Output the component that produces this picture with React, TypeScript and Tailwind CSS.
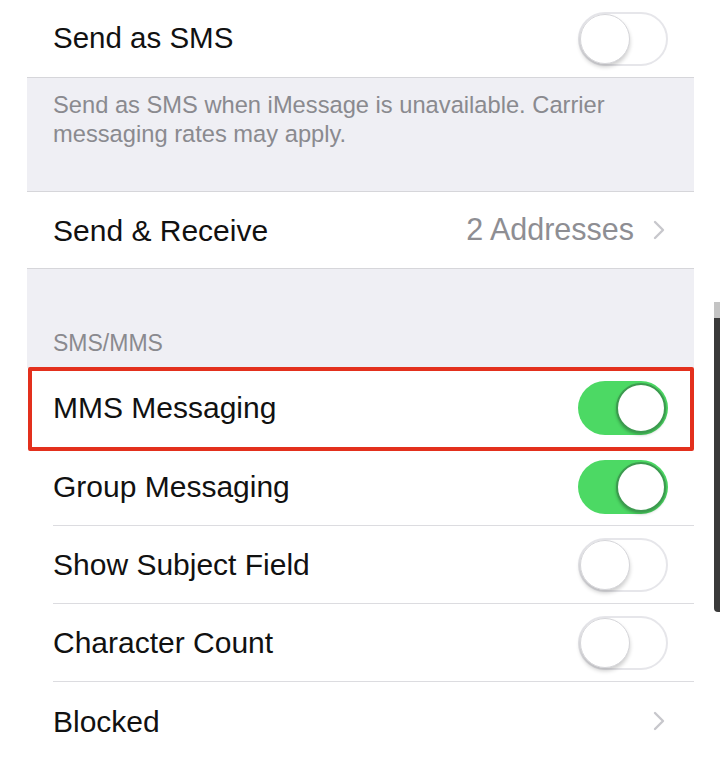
import type { ReactNode } from "react";

function Toggle({ on }: { on: boolean }) {
  if (on) {
    return (
      <span className="flex h-[54px] w-[90px] shrink-0 items-center justify-end rounded-full bg-[#4cd964] pr-[2px]">
        <span className="h-[50px] w-[50px] rounded-full border-2 border-[#3c9a4f] bg-white shadow-[0_2px_3px_rgba(0,0,0,0.25)]" />
      </span>
    );
  }
  return (
    <span className="flex h-[54px] w-[90px] shrink-0 items-center rounded-full border-2 border-[#e6e6ea] bg-white">
      <span className="h-[50px] w-[50px] rounded-full border border-[#d6d6da] bg-white shadow-[0_3px_4px_rgba(0,0,0,0.2)]" />
    </span>
  );
}

function Chevron() {
  return (
    <svg width="14" height="22" viewBox="0 0 14 22" className="shrink-0">
      <polyline
        points="3,3 11,11 3,19"
        fill="none"
        stroke="#c7c7cc"
        strokeWidth="2.4"
        strokeLinecap="round"
        strokeLinejoin="round"
      />
    </svg>
  );
}

interface RowProps {
  label: string;
  children?: ReactNode;
  height: string;
  separator?: boolean;
}

// a plain settings cell: label on the left, control on the right,
// with the hairline inset to the text like iOS
function Row({ label, children, height, separator = true }: RowProps) {
  return (
    <div className="bg-white pl-[26px]">
      <div
        className={`flex items-center justify-between pr-[26px] ${height} ${
          separator ? "border-b border-[#dcdce0]" : ""
        }`}
      >
        <span className="text-[30px] text-[#111]">{label}</span>
        {children}
      </div>
    </div>
  );
}

export default function App() {
  return (
    <div className="relative h-[758px] w-[720px] overflow-hidden bg-white font-['Liberation_Sans',Arial,sans-serif]">
      <div className="ml-[27px] w-[667px]">
        <div className="flex h-[78px] items-center justify-between border-b border-[#d6d6da] bg-white pl-[26px] pr-[26px]">
          <span className="text-[29.5px] text-[#111]">Send as SMS</span>
          <Toggle on={false} />
        </div>

        <div className="h-[113px] bg-[#efeff4] px-[26px] pt-[13px] text-[23.7px] leading-[29px] text-[#8a8a8f]">
          Send as SMS when iMessage is unavailable. Carrier
          <br />
          messaging rates may apply.
        </div>

        <div className="flex h-[78px] items-center justify-between border-y border-[#d6d6da] bg-white pl-[26px] pr-[28px]">
          <span className="text-[30px] text-[#111]">Send &amp; Receive</span>
          <span className="flex items-center gap-[18px]">
            <span className="text-[30.5px] text-[#8e8e93]">2 Addresses</span>
            <Chevron />
          </span>
        </div>

        <div className="flex h-[99px] items-end bg-[#efeff4] px-[26px] pb-[8px]">
          <span className="text-[23px] text-[#8a8a8f]">SMS/MMS</span>
        </div>

        <div className="relative">
          <Row label="MMS Messaging" height="h-[80px]">
            <Toggle on />
          </Row>
          <span className="absolute -top-[1px] -bottom-[3px] left-[1px] right-0 rounded-[2px] border-4 border-[#e3301d]" />
        </div>
        <Row label="Group Messaging" height="h-[78px]">
          <Toggle on />
        </Row>
        <Row label="Show Subject Field" height="h-[78px]">
          <Toggle on={false} />
        </Row>
        <Row label="Character Count" height="h-[78px]">
          <Toggle on={false} />
        </Row>
        <Row label="Blocked" height="h-[78px]" separator={false}>
          <span className="pr-[2px]">
            <Chevron />
          </span>
        </Row>
      </div>

      {/* dark edge of the device frame on the right */}
      <div className="absolute right-0 top-[302px] flex h-[310px] w-[6px] flex-col overflow-hidden rounded-bl-[4px]">
        <div className="h-[16px] bg-[#c4c4c4]" />
        <div className="flex-1 bg-[#3a3a3a]" />
      </div>
    </div>
  );
}
